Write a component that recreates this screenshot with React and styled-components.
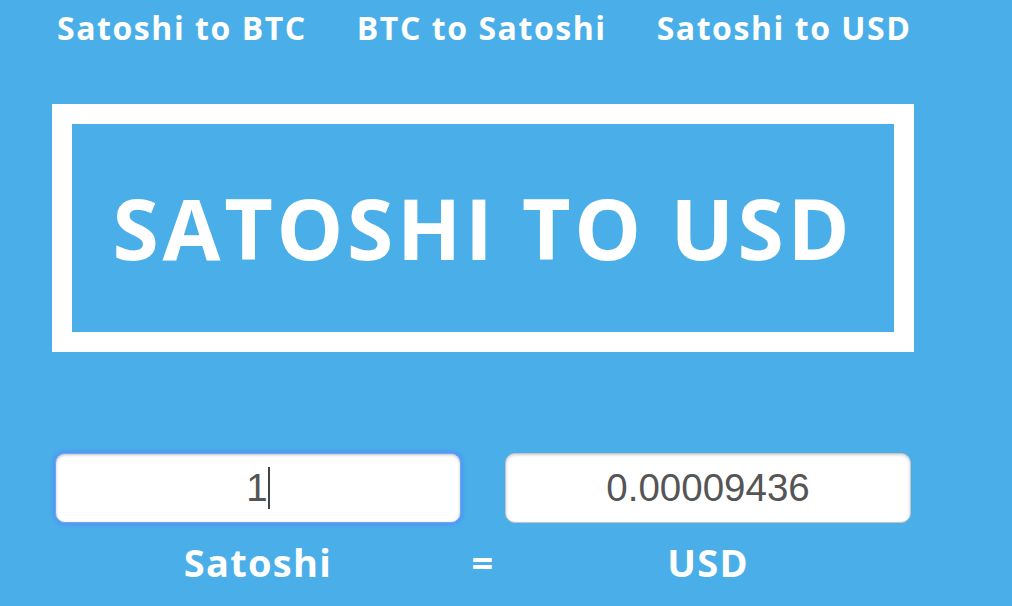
import React from 'react';
import styled, { createGlobalStyle } from 'styled-components';

const GlobalStyle = createGlobalStyle`
    html, body {
        margin: 0;
        padding: 0;
        background: #4aafe8;
    }
    body {
        font-family: 'Open Sans', 'DejaVu Sans', sans-serif;
        color: #fff;
    }
`;

function App() {
    return (
        <Page>
            <GlobalStyle />
            <Nav>
                <NavLink href='#'>Satoshi to BTC</NavLink>
                <NavLink href='#'>BTC to Satoshi</NavLink>
                <NavLink href='#'>Satoshi to USD</NavLink>
            </Nav>
            <TitleBox>
                <Title>SATOSHI TO USD</Title>
            </TitleBox>
            <Converter>
                <Field focused>
                    1<Caret />
                </Field>
                <span />
                <Field>0.00009436</Field>
                <Label>Satoshi</Label>
                <Label>=</Label>
                <Label>USD</Label>
            </Converter>
        </Page>
    );
}

const Page = styled.div`
    width: 1012px;
    height: 606px;
    padding: 6px 0 0 52px;
    box-sizing: border-box;
    overflow: hidden;
`;

const Nav = styled.nav`
    display: flex;
    gap: 50px;
    padding-left: 5px;
    height: 44px;
    align-items: center;
`;

const NavLink = styled.a`
    color: #fff;
    text-decoration: none;
    font-weight: 700;
    font-size: 32px;
    letter-spacing: 1.55px;
    line-height: 44px;
    white-space: nowrap;
`;

const TitleBox = styled.div`
    margin-top: 54px;
    width: 862px;
    height: 248px;
    border: 20px solid #fff;
    box-sizing: border-box;
    display: flex;
    align-items: center;
    justify-content: center;
`;

const Title = styled.h1`
    margin: 0;
    font-weight: 700;
    font-size: 84px;
    letter-spacing: 3.7px;
    line-height: 1;
    color: #fff;
    white-space: nowrap;
`;

const Converter = styled.div`
    display: grid;
    grid-template-columns: 406px 44px 406px;
    row-gap: 17px;
    margin: 101px 0 0 3px;
`;

const Field = styled.div`
    height: 70px;
    box-sizing: border-box;
    background: #fff;
    border-radius: 10px;
    border: 1px solid ${(props) => (props.focused ? '#6fa6f2' : '#c4c4c4')};
    box-shadow: ${(props) =>
        props.focused
            ? '0 0 3px 3px rgba(80, 150, 245, 0.75), inset 0 1px 3px rgba(0,0,0,0.25)'
            : 'inset 0 1px 3px rgba(0,0,0,0.2)'};
    display: flex;
    align-items: center;
    justify-content: center;
    font-family: 'Liberation Sans', Arial, sans-serif;
    font-size: 38.5px;
    color: #555;
`;

const Caret = styled.span`
    display: inline-block;
    width: 2px;
    height: 42px;
    background: #444;
    margin-left: 0;
`;

const Label = styled.div`
    text-align: center;
    font-weight: 700;
    font-size: 38px;
    letter-spacing: 1.3px;
    line-height: 44px;
    color: #fff;
`;

export default App;
